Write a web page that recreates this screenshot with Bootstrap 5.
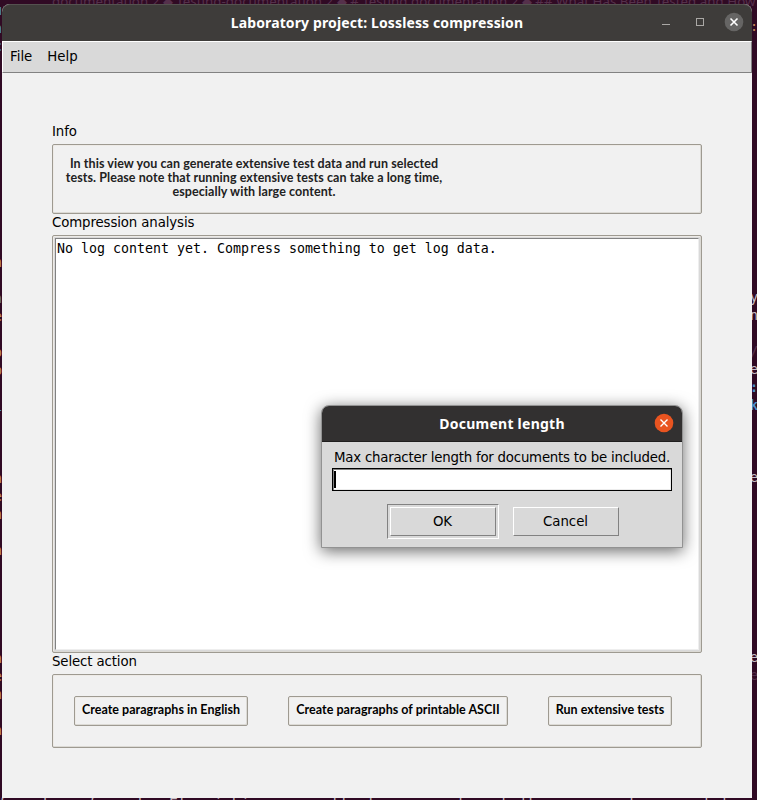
<!DOCTYPE html>
<html lang="en">
<head>
<meta charset="utf-8">
<title>Laboratory project: Lossless compression</title>
<link href="https://cdn.jsdelivr.net/npm/bootstrap@5.3.0/dist/css/bootstrap.min.css" rel="stylesheet">
<style>
html,body{height:800px;overflow:hidden}
body{background:#300a24;font-family:"DejaVu Sans",sans-serif;font-size:13.33px;line-height:16px;color:#000}
.desk{width:757px;height:800px;padding:4px 5px 2px 2px;isolation:isolate}
.term{z-index:-1;inset:0;font:13.33px/18px "DejaVu Sans Mono",monospace;color:#c9bfc6;white-space:pre}
.term span{position:absolute}
.term .topline{font:13.33px/18px "Noto Sans",sans-serif;letter-spacing:.02px}
.term .botline{font-size:14.95px}
.dim{color:#55304b}
.or{color:#c4895a}.bl{color:#4c8fc9}
.win{height:794px;background:#f1f1f1;border-radius:8px 8px 0 0}
.titlebar{height:37px;background:#3e3c3a;border-radius:8px 8px 0 0;border-top:1px solid #54524f;color:#fff;font-family:"Noto Sans",sans-serif;font-weight:700;font-size:14px;letter-spacing:.12px}
.titlebar svg{right:0;top:0}
.menus{height:32px;background:#d9d9d9;border:1px solid;border-color:#fff #828282 #828282 #fff;padding:7px 7px 0;gap:15px}
.main-area{padding:50px 50px 0}
.cap{height:21px;line-height:18px;letter-spacing:-.12px}
.etched{border:1px solid #9e9a91;border-radius:2px;box-shadow:inset -1px -1px #dcdad5,inset 1px 1px #eeebe7}
.lato{font-family:Lato,sans-serif;font-weight:700;font-size:12.5px;font-variant-ligatures:none;letter-spacing:.03px}
.info{height:70px;padding-top:12px;color:#222}
.info div{width:402px;line-height:14px;white-space:nowrap;letter-spacing:.07px}
.logbox{height:418px;padding:2px;background:#d9d9d9}
.logtext{height:100%;background:#fff;border:1px solid #828282;border-color:#828282 #eee #eee #828282;font:13.29px/16px "DejaVu Sans Mono",monospace;padding:2px 1px}
.acts{height:74px;padding:0 21px;gap:40px}
.acts button{height:30px;padding:0 0 2px;background:#f1f1f1;white-space:nowrap;color:#000}
.w1{width:174px}.w2{width:220px}.w3{width:124px}
.dlg{left:321px;top:405px;width:362px;height:143px;background:#d9d9d9;border:1px solid #929292;border-radius:8px 8px 0 0;box-shadow:0 3px 16px rgba(0,0,0,.6)}
.dlg .head{height:36px;background:#323030;border-bottom:1px solid #1f1e1e;border-radius:7px 7px 0 0;color:#fff;font:700 14px/36px "Noto Sans",sans-serif;letter-spacing:.25px}
.dlg svg{right:-1px;top:0}
.prompt-text{height:26px;padding-top:8px;letter-spacing:-.22px}
.entry{width:340px;height:23px;border:1px solid #000;background:#fff;box-shadow:inset 1px 1px #828282,inset -1px -1px #ececec;padding:2px 1px}
.entry i{width:2px;height:17px;background:#000}
.dlg-btns{padding:13px 0 0 1px;gap:14px}
.ring{width:112px;height:35px;border:1px solid;border-color:#828282 #fff #fff #828282;padding:2px}
.tkb{width:106px;height:29px;background:#d9d9d9;border:1px solid;border-color:#fff #828282 #828282 #fff;color:#000;padding:1px 0 0;display:block}
</style>
</head>
<body>
<div class="desk position-relative">
 <div class="term position-absolute overflow-hidden" aria-hidden="true">
  <span class="dim topline" style="left:52px;top:-8px">documentation 2 ◆ Testing-documentation 2 ◆ # Testing documentation 2 ◆ ## What Has Been Tested and How</span>
  <span class="botline" style="left:-2px;top:794px">f number of words. Flourishing generally lesson centers both courses planes and down</span>
  <span class="bl" style="left:-6px;top:2px">u
n
c</span>
  <span class="or" style="left:-6px;top:254px">n

<b class="fw-normal text-secondary">a</b>
e

o
p

<b class="fw-normal bl">i</b>



a
e
n

a




<b> </b>
a
e
n

a</span>
  <span style="left:750px;top:289px">y
n

<b class="dim">/</b>
e
<b class="bl">:</b>
<b class="bl">k</b>



e</span>
  <span class="or" style="left:750px;top:18px">:-</span>
  <span style="left:750px;top:649px">e
<b class="dim fw-normal">e</b></span>
 </div>
 <div class="win">
  <div class="titlebar position-relative d-flex align-items-center justify-content-center"><span>Laboratory project: Lossless compression</span>
   <svg class="position-absolute" width="100" height="36"><path d="M10 19.500h8" stroke="#aaa8a5"/><rect x="44.500" y="13.500" width="7" height="7" fill="none" stroke="#aaa8a5"/><circle cx="82" cy="17" r="9.300" fill="#666564"/><path d="M78.500 13.500l7 7m0-7l-7 7" stroke="#fff" stroke-width="1.600"/></svg>
  </div>
  <nav class="menus d-flex"><span>File</span><span>Help</span></nav>
  <main class="main-area">
   <div class="cap"><span>Info</span></div>
   <section class="etched info lato"><div class="text-center">In this view you can generate extensive test data and run selected<br>tests. Please note that running extensive tests can take a long time,<br>especially with large content.</div></section>
   <div class="cap"><span>Compression analysis</span></div>
   <section class="etched logbox"><div class="logtext">No log content yet. Compress something to get log data.</div></section>
   <div class="cap"><span>Select action</span></div>
   <section class="etched acts d-flex align-items-center"><button class="etched lato w1">Create paragraphs in English</button><button class="etched lato w2">Create paragraphs of printable ASCII</button><button class="etched lato w3">Run extensive tests</button></section>
  </main>
 </div>
 <div class="dlg position-absolute">
  <div class="head text-center"><span>Document length</span>
   <svg class="position-absolute" width="40" height="36"><circle cx="21" cy="17" r="9.300" fill="#e95420"/><path d="M17.500 13.500l7 7m0-7l-7 7" stroke="#fff" stroke-width="1.400"/></svg>
  </div>
  <div class="prompt-text text-center text-nowrap">Max character length for documents to be included.</div>
  <div class="entry d-flex mx-auto"><i></i></div>
  <div class="dlg-btns d-flex align-items-center justify-content-center"><div class="ring"><button class="tkb">OK</button></div><button class="tkb">Cancel</button></div>
 </div>
</div>
<script src="https://cdn.jsdelivr.net/npm/bootstrap@5.3.0/dist/js/bootstrap.bundle.min.js"></script>
</body>
</html>
